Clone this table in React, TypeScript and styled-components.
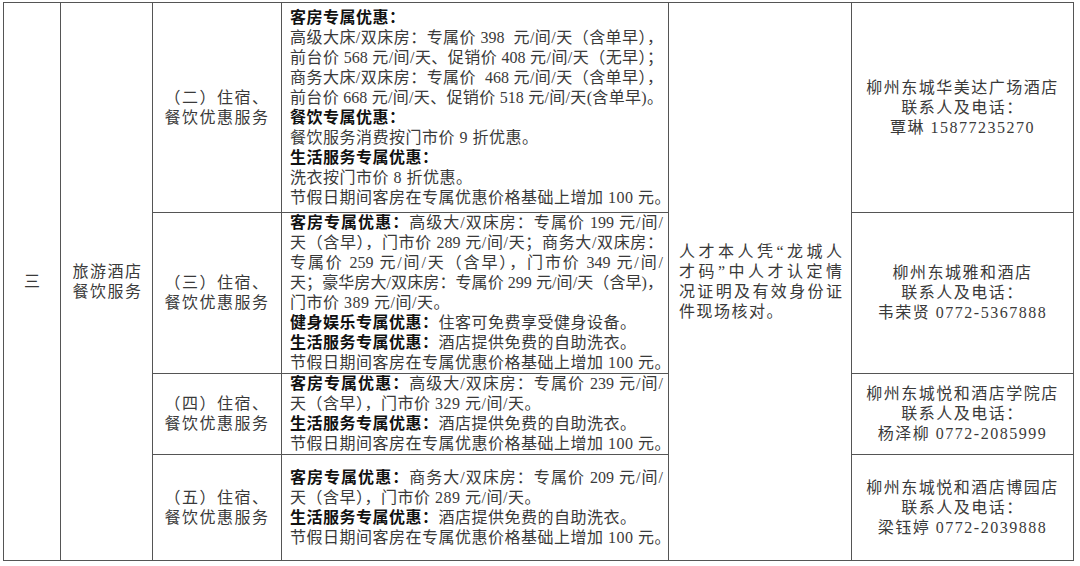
import React from "react";
import styled, { createGlobalStyle } from "styled-components";

type Line = { bold?: string; text?: string; full?: boolean };

interface Offer {
  title: string[];
  height: number;
  lines: Line[];
  contact: string[];
}

const HOLIDAY = "节假日期间客房在专属优惠价格基础上增加 100 元。";
const LAUNDRY = "酒店提供免费的自助洗衣。";

const offers: Offer[] = [
  {
    title: ["（二）住宿、", "餐饮优惠服务"],
    height: 210,
    lines: [
      { bold: "客房专属优惠：" },
      { text: "高级大床/双床房：专属价 398  元/间/天（含单早），", full: true },
      { text: "前台价 568 元/间/天、促销价 408 元/间/天（无早）；", full: true },
      { text: "商务大床/双床房：专属价  468 元/间/天（含单早），", full: true },
      { text: "前台价 668 元/间/天、促销价 518 元/间/天(含单早)。", full: true },
      { bold: "餐饮专属优惠：" },
      { text: "餐饮服务消费按门市价 9 折优惠。" },
      { bold: "生活服务专属优惠：" },
      { text: "洗衣按门市价 8 折优惠。" },
      { text: HOLIDAY },
    ],
    contact: ["柳州东城华美达广场酒店", "联系人及电话：", "覃琳 15877235270"],
  },
  {
    title: ["（三）住宿、", "餐饮优惠服务"],
    height: 161,
    lines: [
      { bold: "客房专属优惠：", text: "高级大/双床房：专属价 199 元/间/", full: true },
      { text: "天（含早），门市价 289 元/间/天；商务大/双床房：", full: true },
      { text: "专属价 259 元/间/天（含早），门市价 349 元/间/", full: true },
      { text: "天；豪华房大/双床房：专属价 299 元/间/天（含早)，", full: true },
      { text: "门市价 389 元/间/天。" },
      { bold: "健身娱乐专属优惠：", text: "住客可免费享受健身设备。" },
      { bold: "生活服务专属优惠：", text: LAUNDRY },
      { text: HOLIDAY },
    ],
    contact: ["柳州东城雅和酒店", "联系人及电话：", "韦荣贤 0772-5367888"],
  },
  {
    title: ["（四）住宿、", "餐饮优惠服务"],
    height: 81,
    lines: [
      { bold: "客房专属优惠：", text: "高级大/双床房：专属价 239 元/间/", full: true },
      { text: "天（含早），门市价 329 元/间/天。" },
      { bold: "生活服务专属优惠：", text: LAUNDRY },
      { text: HOLIDAY },
    ],
    contact: ["柳州东城悦和酒店学院店", "联系人及电话：", "杨泽柳 0772-2085999"],
  },
  {
    title: ["（五）住宿、", "餐饮优惠服务"],
    height: 106,
    lines: [
      { bold: "客房专属优惠：", text: "商务大/双床房：专属价 209 元/间/", full: true },
      { text: "天（含早），门市价 289 元/间/天。" },
      { bold: "生活服务专属优惠：", text: LAUNDRY },
      { text: HOLIDAY },
    ],
    contact: ["柳州东城悦和酒店博园店", "联系人及电话：", "梁钰婷 0772-2039888"],
  },
];

const condition = ["人才本人凭“龙城人", "才码”中人才认定情", "况证明及有效身份证", "件现场核对。"];

const GlobalStyle = createGlobalStyle`
  html, body {
    margin: 0;
    background: #ffffff;
  }
  body {
    font-family: "Liberation Serif", "Noto Sans CJK SC", serif;
    color: #3a3a3a;
  }
`;

const Page = styled.div`
  padding: 2px 0 0 3px;
`;

const Sheet = styled.table`
  width: 1070px;
  border-collapse: collapse;
  table-layout: fixed;
  border: 1.5px solid #7a7a7a;
  font-size: 16px;
  line-height: 20px;
`;

const Row = styled.tr<{ $h: number }>`
  height: ${(p) => p.$h}px;
`;

const Cell = styled.td<{ $align?: "left" | "center"; $spacing?: number; $pad?: string }>`
  border: 1px solid #555555;
  padding: ${(p) => p.$pad ?? "0"};
  vertical-align: middle;
  text-align: ${(p) => p.$align ?? "center"};
  letter-spacing: ${(p) => p.$spacing ?? 0}px;
  white-space: nowrap;
`;

/* full lines are stretched to the cell edges, like the justified paragraphs of the source */
const TextLine = styled.div<{ $full?: boolean }>`
  display: block;
  text-align: left;
  text-align-last: ${(p) => (p.$full ? "justify" : "left")};
  white-space: pre;
  ${(p) => p.$full && "letter-spacing: 0;"}
`;

const Label = styled.b`
  font-weight: 700;
  color: #111111;
`;

const CenterLine = styled.div`
  display: block;
`;

export default function App() {
  return (
    <>
      <GlobalStyle />
      <Page>
        <Sheet>
          <colgroup>
            <col style={{ width: 57 }} />
            <col style={{ width: 92 }} />
            <col style={{ width: 129 }} />
            <col style={{ width: 387 }} />
            <col style={{ width: 183 }} />
            <col style={{ width: 222 }} />
          </colgroup>
          <tbody>
            {offers.map((o, i) => (
              <Row key={i} $h={o.height}>
                {i === 0 && (
                  <>
                    <Cell rowSpan={offers.length}>三</Cell>
                    <Cell rowSpan={offers.length} $spacing={1.5} $pad="0 0 0 2px">
                      <CenterLine>旅游酒店</CenterLine>
                      <CenterLine>餐饮服务</CenterLine>
                    </Cell>
                  </>
                )}
                <Cell $spacing={1.5}>
                  {o.title.map((t) => (
                    <CenterLine key={t}>{t}</CenterLine>
                  ))}
                </Cell>
                <Cell $align="left" $spacing={0.5} $pad="0 5px 0 8px">
                  {o.lines.map((l, j) => (
                    <TextLine key={j} $full={l.full}>
                      {l.bold && <Label>{l.bold}</Label>}
                      {l.text}
                    </TextLine>
                  ))}
                </Cell>
                {i === 0 && (
                  <Cell rowSpan={offers.length} $align="left" $spacing={1.5} $pad="0 9px 0 10px">
                    {condition.map((c, j) => (
                      <TextLine key={c} $full={j < condition.length - 1}>
                        {c}
                      </TextLine>
                    ))}
                  </Cell>
                )}
                <Cell $spacing={1.5}>
                  {o.contact.map((c) => (
                    <CenterLine key={c}>{c}</CenterLine>
                  ))}
                </Cell>
              </Row>
            ))}
          </tbody>
        </Sheet>
      </Page>
    </>
  );
}
